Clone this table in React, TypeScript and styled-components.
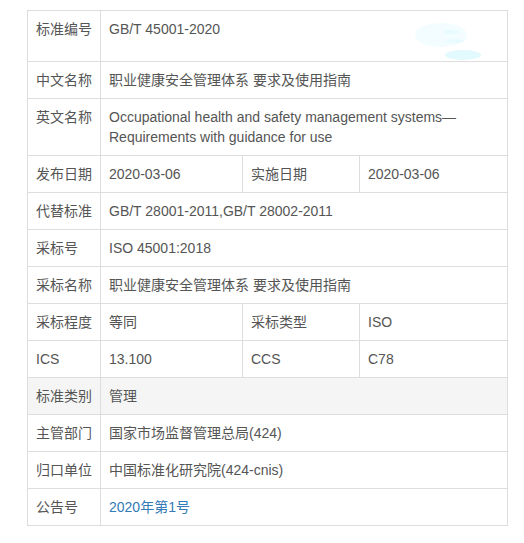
import React from "react";
import styled, { createGlobalStyle } from "styled-components";

const GlobalStyle = createGlobalStyle`
  html, body { margin: 0; padding: 0; background: #ffffff; }
  body {
    font-family: "Liberation Sans", Arial, "Noto Sans CJK SC", sans-serif;
    font-size: 14px;
    color: #555555;
  }
`;

const Page = styled.div`
  padding: 10px 0 0 27px;
`;

const Table = styled.table`
  border-collapse: collapse;
  width: 480px;
  table-layout: fixed;
  font-size: 14px;
  line-height: 20px;
  color: #555555;
`;

const Row = styled.tr<{ $shade?: boolean }>`
  background: ${(p) => (p.$shade ? "#f5f5f5" : "#ffffff")};
`;

const Cell = styled.td<{ $tall?: boolean }>`
  border: 1px solid #dddddd;
  padding: ${(p) => (p.$tall ? "8px 8px 22px" : "8px")};
  vertical-align: top;
  position: relative;
  word-wrap: break-word;
`;

const Label = styled(Cell)`
  white-space: nowrap;
`;

const Link = styled.a`
  color: #337ab7;
  text-decoration: none;
`;

const Watermark = styled.svg`
  position: absolute;
  right: 14px;
  top: 4px;
  width: 90px;
  height: 46px;
  pointer-events: none;
`;

export default function App() {
  return (
    <Page>
      <GlobalStyle />
      <Table>
        <colgroup>
          <col style={{ width: 73 }} />
          <col style={{ width: 142 }} />
          <col style={{ width: 117 }} />
          <col style={{ width: 148 }} />
        </colgroup>
        <tbody>
          <Row>
            <Label $tall>标准编号</Label>
            <Cell $tall colSpan={3}>
              GB/T 45001-2020
              <Watermark viewBox="0 0 90 46">
                <ellipse cx="38" cy="20" rx="26" ry="12" fill="#f3fdff" />
                <ellipse cx="48" cy="17" rx="8" ry="2" fill="#e8fbff" />
                <ellipse cx="52" cy="26" rx="9" ry="2" fill="#e8fbff" />
                <ellipse cx="60" cy="40" rx="18" ry="5" fill="#e2f9fe" />
              </Watermark>
            </Cell>
          </Row>
          <Row>
            <Label>中文名称</Label>
            <Cell colSpan={3}>职业健康安全管理体系 要求及使用指南</Cell>
          </Row>
          <Row>
            <Label>英文名称</Label>
            <Cell colSpan={3}>
              Occupational health and safety management systems—Requirements with guidance for use
            </Cell>
          </Row>
          <Row>
            <Label>发布日期</Label>
            <Cell>2020-03-06</Cell>
            <Label>实施日期</Label>
            <Cell>2020-03-06</Cell>
          </Row>
          <Row>
            <Label>代替标准</Label>
            <Cell colSpan={3}>GB/T 28001-2011,GB/T 28002-2011</Cell>
          </Row>
          <Row>
            <Label>采标号</Label>
            <Cell colSpan={3}>ISO 45001:2018</Cell>
          </Row>
          <Row>
            <Label>采标名称</Label>
            <Cell colSpan={3}>职业健康安全管理体系 要求及使用指南</Cell>
          </Row>
          <Row>
            <Label>采标程度</Label>
            <Cell>等同</Cell>
            <Label>采标类型</Label>
            <Cell>ISO</Cell>
          </Row>
          <Row>
            <Label>ICS</Label>
            <Cell>13.100</Cell>
            <Label>CCS</Label>
            <Cell>C78</Cell>
          </Row>
          <Row $shade>
            <Label>标准类别</Label>
            <Cell colSpan={3}>管理</Cell>
          </Row>
          <Row>
            <Label>主管部门</Label>
            <Cell colSpan={3}>国家市场监督管理总局(424)</Cell>
          </Row>
          <Row>
            <Label>归口单位</Label>
            <Cell colSpan={3}>中国标准化研究院(424-cnis)</Cell>
          </Row>
          <Row>
            <Label>公告号</Label>
            <Cell colSpan={3}>
              <Link href="#">2020年第1号</Link>
            </Cell>
          </Row>
        </tbody>
      </Table>
    </Page>
  );
}
